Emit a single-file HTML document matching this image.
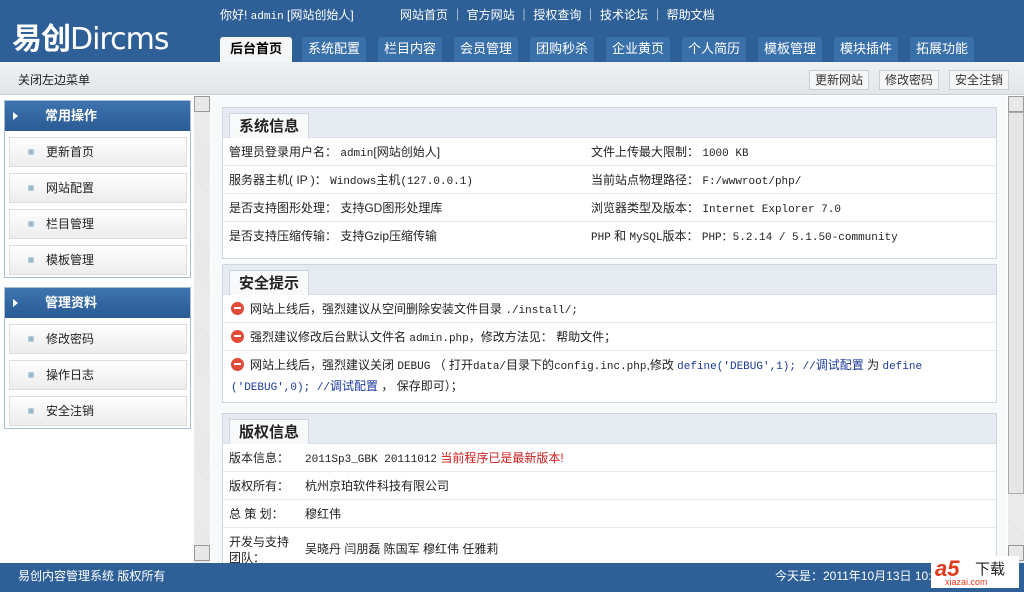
<!DOCTYPE html>
<html><head><meta charset="utf-8"><style>
*{margin:0;padding:0;box-sizing:border-box}
body{width:1024px;height:592px;overflow:hidden;position:relative;background:#fff;font:12px "Liberation Sans","Noto Sans CJK SC","WenQuanYi Zen Hei",sans-serif;color:#222}
.a{position:absolute}
#hd{left:0;top:0;width:1024px;height:62px;background:#2e6097}
.logo{left:12px;top:14px;color:#fff;font-size:30px;font-weight:bold;letter-spacing:-1px}
.top{left:220px;top:6px;color:#fff;font-size:12px}
.tab{top:37px;height:25px;background:#3a70aa;color:#fff;text-align:center;line-height:24px;border-radius:3px 3px 0 0;font-size:13px}
.tab.on{background:#f4f6f8;color:#000;font-weight:bold}
#tb{left:0;top:62px;width:1024px;height:33px;background:linear-gradient(#eef1f4,#e2e6ea);border-bottom:1px solid #c9ced3}
.btn{top:70px;height:20px;border:1px solid #c9ced3;background:#f4f6f8;line-height:18px;padding:0 5px;color:#333;font-size:12px}
.side{left:4px;width:187px;border:1px solid #a9bfd6;background:#fff}
.sh{height:30px;background:linear-gradient(#3e74b0,#2a5b94);color:#fff;font-weight:bold;font-size:13px;line-height:30px;padding-left:40px;position:relative}
.sh:before{content:"";position:absolute;left:8px;top:11px;border-left:5px solid #fff;border-top:4px solid transparent;border-bottom:4px solid transparent}
.si{margin:6px 3px 0 4px;height:30px;border:1px solid #ddd;background:linear-gradient(#fff,#ececec);line-height:28px;padding-left:36px;position:relative;font-size:12px}
.si:before{content:"";position:absolute;left:18px;top:11px;width:6px;height:6px;background:radial-gradient(#8ab,#cde)}
.sb{width:16px;background:repeating-linear-gradient(45deg,#e0e0e0 0 1px,#f4f4f4 1px 2px)}
.ar{width:16px;height:16px;background:#e8e8e8;border:1px solid #999}
.box{left:222px;width:775px;border:1px solid #cdd6df;background:#fff}
.bh{height:30px;background:#e6ebf1;position:relative;border-bottom:1px solid #dde}
.bh span{position:absolute;left:6px;top:5px;height:25px;padding:0 9px;background:#f8f9fa;border:1px solid #cdd6df;border-bottom:none;font-size:15px;font-weight:bold;line-height:25px;color:#222}
.r{height:28px;line-height:28px;border-bottom:1px solid #e4e8ec;padding-left:6px;position:relative;font-size:12px;white-space:nowrap}
.c2{position:absolute;left:368px}
.m{font-family:"Liberation Mono","Noto Sans CJK SC",monospace;font-size:11px}
.ic{display:inline-block;width:13px;height:13px;border-radius:50%;background:#e24a3a;vertical-align:-2px;margin-right:6px;position:relative}
.ic:after{content:"";position:absolute;left:3px;top:5px;width:7px;height:2px;background:#fff}
.bl{color:#1a3a9a}
#ft{left:0;top:563px;width:1024px;height:29px;background:#2e6097;color:#fff;line-height:27px;font-size:12px}
</style></head><body>
<div id="hd" class="a"></div>
<div class="a logo">易创<span style="font-family:'DejaVu Sans';font-weight:normal">Dircms</span></div>
<div class="a top">你好! <span class="m">admin</span> [网站创始人]</div>
<div class="a top" style="left:400px">网站首页 ｜ 官方网站 ｜ 授权查询 ｜ 技术论坛 ｜ 帮助文档</div>
<div class="a tab on" style="left:220px;width:72px">后台首页</div>
<div class="a tab" style="left:302px;width:64px">系统配置</div>
<div class="a tab" style="left:378px;width:64px">栏目内容</div>
<div class="a tab" style="left:454px;width:64px">会员管理</div>
<div class="a tab" style="left:530px;width:64px">团购秒杀</div>
<div class="a tab" style="left:606px;width:64px">企业黄页</div>
<div class="a tab" style="left:682px;width:64px">个人简历</div>
<div class="a tab" style="left:758px;width:64px">模板管理</div>
<div class="a tab" style="left:834px;width:64px">模块插件</div>
<div class="a tab" style="left:910px;width:64px">拓展功能</div>
<div id="tb" class="a"></div>
<div class="a" style="left:18px;top:71px;font-size:12px">关闭左边菜单</div>
<div class="a btn" style="left:809px">更新网站</div>
<div class="a btn" style="left:879px">修改密码</div>
<div class="a btn" style="left:949px">安全注销</div>

<div class="a side" style="top:100px;height:178px"><div class="sh">常用操作</div>
<div class="si">更新首页</div><div class="si">网站配置</div><div class="si">栏目管理</div><div class="si">模板管理</div></div>
<div class="a side" style="top:287px;height:142px"><div class="sh">管理资料</div>
<div class="si">修改密码</div><div class="si">操作日志</div><div class="si">安全注销</div></div>

<div class="a sb" style="left:194px;top:96px;height:467px"></div>
<div class="a ar" style="left:194px;top:96px"></div>
<div class="a ar" style="left:194px;top:545px"></div>
<div class="a sb" style="left:1008px;top:96px;height:467px"></div>
<div class="a" style="left:1008px;top:112px;width:16px;height:382px;background:#e6e6e6;border:1px solid #aaa"></div>
<div class="a ar" style="left:1008px;top:96px"></div>
<div class="a ar" style="left:1008px;top:545px"></div>
<div class="a" style="left:211px;top:96px;width:796px;height:467px;background:#f7f9fb"></div>

<div class="a box" style="top:107px;height:152px">
<div class="bh"><span>系统信息</span></div>
<div class="r">管理员登录用户名： <span class="m">admin</span>[网站创始人]<span class="c2">文件上传最大限制： <span class="m">1000 KB</span></span></div>
<div class="r">服务器主机( IP )： <span class="m">Windows</span>主机<span class="m">(127.0.0.1)</span><span class="c2">当前站点物理路径： <span class="m">F:/wwwroot/php/</span></span></div>
<div class="r">是否支持图形处理： 支持GD图形处理库<span class="c2">浏览器类型及版本： <span class="m">Internet Explorer 7.0</span></span></div>
<div class="r" style="border:none">是否支持压缩传输： 支持Gzip压缩传输<span class="c2"><span class="m">PHP</span> 和 <span class="m">MySQL</span>版本： <span class="m">PHP：5.2.14 / 5.1.50-community</span></span></div>
</div>

<div class="a box" style="top:264px;height:139px">
<div class="bh"><span>安全提示</span></div>
<div class="r" style="padding-left:8px"><i class="ic"></i>网站上线后，强烈建议从空间删除安装文件目录 <span class="m">./install/;</span></div>
<div class="r" style="padding-left:8px"><i class="ic"></i>强烈建议修改后台默认文件名 <span class="m">admin.php</span>，修改方法见： 帮助文件；</div>
<div class="r" style="padding-left:8px;height:48px;line-height:19px;padding-top:5px;border:none;white-space:normal"><i class="ic"></i>网站上线后，强烈建议关闭 <span class="m">DEBUG</span> （ 打开<span class="m">data/</span>目录下的<span class="m">config.inc.php</span>,修改 <span class="bl m">define('DEBUG',1); //</span><span class="bl">调试配置</span> 为 <span class="bl m">define</span><br><span class="bl m">('DEBUG',0); //</span><span class="bl">调试配置</span> ， 保存即可）；</div>
</div>

<div class="a box" style="top:413px;height:152px">
<div class="bh"><span>版权信息</span></div>
<div class="r">版本信息：<span style="position:absolute;left:82px"><span class="m">2011Sp3_GBK 20111012</span> <span style="color:#d01c1c">当前程序已是最新版本!</span></span></div>
<div class="r">版权所有：<span style="position:absolute;left:82px">杭州京珀软件科技有限公司</span></div>
<div class="r">总 策 划：<span style="position:absolute;left:82px">穆红伟</span></div>
<div class="r" style="line-height:16px;padding-top:6px;height:40px">开发与支持<br>团队：<span style="position:absolute;left:82px;top:13px">吴晓丹 闫朋磊 陈国军 穆红伟 任雅莉</span></div>
</div>

<div id="ft" class="a"><span style="position:absolute;left:18px">易创内容管理系统 版权所有</span><span style="position:absolute;left:775px">今天是：2011年10月13日 10:</span></div>
<div class="a" style="left:931px;top:556px;width:88px;height:32px;background:#fff"><span style="position:absolute;left:4px;top:0;color:#e03a1e;font-weight:bold;font-size:22px;font-style:italic">a5</span><span style="position:absolute;left:44px;top:2px;font-size:15px;color:#222">下载</span><span style="position:absolute;left:14px;top:21px;font-size:9px;color:#e03a1e">xiazai.com</span></div>
</body></html>
